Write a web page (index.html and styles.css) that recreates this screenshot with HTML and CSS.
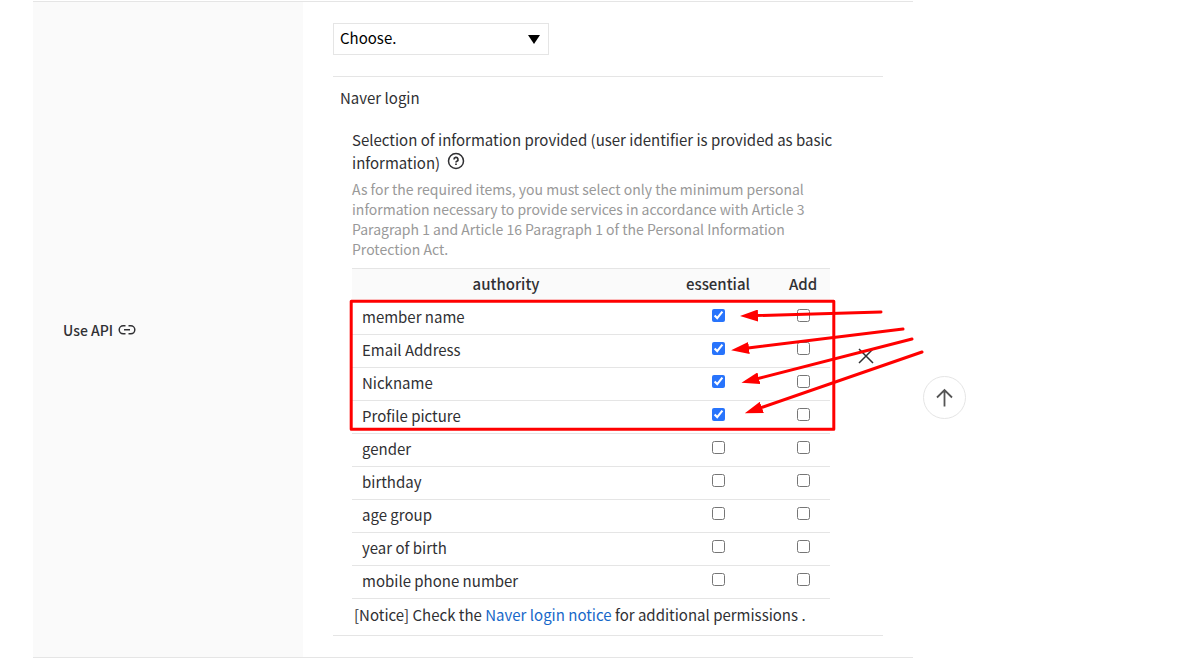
FILE: index.html
```
<!DOCTYPE html>
<html lang="en">
<head>
    <meta charset="UTF-8">
    <meta name="viewport" content="width=device-width, initial-scale=1.0">
    <title>Use API</title>
    <link rel="stylesheet" href="styles.css">
</head>
<body>
    <div class="page">
        <main class="form-row">
            <div class="row-label">
                <span>Use API</span>
                <svg class="link-icon" width="18" height="12" viewBox="0 0 18 12" fill="none" stroke="currentColor" stroke-width="1.5">
                    <path d="M7.500 1.800H5.200a4 4 0 0 0 0 8H7.500M10.500 1.800h2.300a4 4 0 0 1 0 8H10.500M6 5.800h6"/>
                </svg>
            </div>

            <div class="row-content">
                <select class="api-select" aria-label="Use API">
                    <option>Choose.</option>
                </select>

                <!-- Naver login -->
                <section class="api-item">
                    <div class="api-body">
                        <h2 class="api-name">Naver login</h2>
                        <div class="api-detail">
                            <p class="detail-title">
                                Selection of information provided (user identifier is provided as basic information)
                                <button class="help-btn" type="button" aria-label="Help">
                                    <svg width="18" height="18" viewBox="0 0 18 18" fill="none" stroke="currentColor" stroke-width="1.5">
                                        <circle cx="9" cy="9" r="7.500"/>
                                        <path d="M7 7.500a2 2 0 1 1 2.900 1.700Q9 9.600 9 10.500M9 11.600v1.500" stroke-width="1.700"/>
                                    </svg>
                                </button>
                            </p>
                            <p class="detail-desc">As for the required items, you must select only the minimum personal information necessary to provide services in accordance with Article 3 Paragraph 1 and Article 16 Paragraph 1 of the Personal Information Protection Act.</p>

                            <div class="table-wrap">
                                <table class="auth-table">
                                    <thead>
                                        <tr><th>authority</th><th class="col-essential">essential</th><th class="col-add">Add</th></tr>
                                    </thead>
                                    <tbody>
                                        <tr>
                                            <td>member name</td>
                                            <td><input type="checkbox" aria-label="member name essential" checked></td>
                                            <td><input type="checkbox" aria-label="member name add"></td>
                                        </tr>
                                        <tr>
                                            <td>Email Address</td>
                                            <td><input type="checkbox" aria-label="Email Address essential" checked></td>
                                            <td><input type="checkbox" aria-label="Email Address add"></td>
                                        </tr>
                                        <tr>
                                            <td>Nickname</td>
                                            <td><input type="checkbox" aria-label="Nickname essential" checked></td>
                                            <td><input type="checkbox" aria-label="Nickname add"></td>
                                        </tr>
                                        <tr>
                                            <td>Profile picture</td>
                                            <td><input type="checkbox" aria-label="Profile picture essential" checked></td>
                                            <td><input type="checkbox" aria-label="Profile picture add"></td>
                                        </tr>
                                        <tr>
                                            <td>gender</td>
                                            <td><input type="checkbox" aria-label="gender essential"></td>
                                            <td><input type="checkbox" aria-label="gender add"></td>
                                        </tr>
                                        <tr>
                                            <td>birthday</td>
                                            <td><input type="checkbox" aria-label="birthday essential"></td>
                                            <td><input type="checkbox" aria-label="birthday add"></td>
                                        </tr>
                                        <tr>
                                            <td>age group</td>
                                            <td><input type="checkbox" aria-label="age group essential"></td>
                                            <td><input type="checkbox" aria-label="age group add"></td>
                                        </tr>
                                        <tr>
                                            <td>year of birth</td>
                                            <td><input type="checkbox" aria-label="year of birth essential"></td>
                                            <td><input type="checkbox" aria-label="year of birth add"></td>
                                        </tr>
                                        <tr>
                                            <td>mobile phone number</td>
                                            <td><input type="checkbox" aria-label="mobile phone number essential"></td>
                                            <td><input type="checkbox" aria-label="mobile phone number add"></td>
                                        </tr>
                                    </tbody>
                                </table>

                                <!-- red box and arrows over the first four rows -->
                                <svg class="markup" width="580" height="136" viewBox="0 0 580 136" fill="none" stroke="#f00" stroke-width="3" stroke-linecap="round">
                                    <defs>
                                        <marker id="head" markerUnits="userSpaceOnUse" markerWidth="18" markerHeight="12" refX="3" refY="6" orient="auto">
                                            <path d="M0 0L18 6L0 12Z" fill="#f00" stroke="none"/>
                                        </marker>
                                    </defs>
                                    <rect x="3.200" y="3.200" width="482.600" height="128" stroke-linejoin="round"/>
                                    <path d="M533 14L407 17.600" marker-end="url(#head)"/>
                                    <path d="M555 31L398 50.300" marker-end="url(#head)"/>
                                    <path d="M564 41L408 81" marker-end="url(#head)"/>
                                    <path d="M574 54L411 110.400" marker-end="url(#head)"/>
                                </svg>
                            </div>
                        </div>
                        <p class="notice">[Notice] Check the <a href="#">Naver login notice</a> for additional permissions .</p>
                    </div>
                    <button class="remove-btn" type="button" aria-label="Remove">
                        <svg width="16" height="16" viewBox="0 0 16 16" fill="none" stroke="currentColor" stroke-width="1.5">
                            <path d="M1 1L15 15M15 1L1 15"/>
                        </svg>
                    </button>
                </section>
            </div>
        </main>

        <aside class="side">
            <button class="top-btn" type="button" aria-label="Back to top">
                <svg width="18" height="20" viewBox="0 0 18 20" fill="none" stroke="#555" stroke-width="1.800">
                    <path d="M8.500 18.500V2M1 9.500L8.500 2L16 9.500"/>
                </svg>
            </button>
        </aside>
    </div>
</body>
</html>
```
FILE: styles.css
```
* {
    margin: 0;
    padding: 0;
    box-sizing: border-box;
}

body {
    background: #fff;
    color: #303033;
    font-family: "Noto Sans CJK KR", "Noto Sans", sans-serif;
    font-size: 15px;
    line-height: 22px;
}

button {
    border: none;
    background: none;
    color: inherit;
    cursor: pointer;
}

svg {
    display: block;
}

.page {
    display: flex;
    align-items: flex-start;
    padding: 1px 0 0 33px;
}

/* form row */
.form-row {
    flex: 1;
    display: grid;
    grid-template-columns: 270px 1fr;
    border-top: 1px solid #e5e5e5;
    border-bottom: 1px solid #e5e5e5;
}

.row-label {
    display: flex;
    align-items: center;
    gap: 5px;
    padding-left: 30px;
    background: #fafafa;
    font-size: 14px;
    font-weight: 500;
}

.row-content {
    padding: 21px 30px;
}

.api-select {
    display: block;
    width: 216px;
    height: 32px;
    padding: 0 6px 2px;
    border: 1px solid #e5e5e5;
    border-radius: 0;
    appearance: none;
    background: #fff url("data:image/svg+xml,%3Csvg xmlns='http://www.w3.org/2000/svg' width='12' height='9'%3E%3Cpath d='M0 0h12L6 9z'/%3E%3C/svg%3E") no-repeat right 8px center;
    color: #000;
    font: inherit;
}

/* api item */
.api-item {
    display: flex;
    margin-top: 21px;
    border-top: 1px solid #e5e5e5;
    border-bottom: 1px solid #e5e5e5;
}

.api-body {
    flex: 1;
    padding: 10px 0 9px 19px;
}

.api-name {
    margin-left: -12px;
    font-size: 15px;
    font-weight: 400;
}

.api-detail {
    padding-top: 19px;
}

.detail-title {
    margin-right: -12px;
    line-height: 23px;
}

.help-btn {
    display: inline-block;
    margin-left: 4px;
    vertical-align: -1px;
}

.detail-desc {
    margin: 5px 0 9px;
    color: #999;
    font-size: 14px;
    line-height: 20px;
}

.table-wrap {
    position: relative;
}

.auth-table {
    width: 100%;
    border-collapse: collapse;
    border-top: 1px solid #e5e5e5;
}

.auth-table th,
.auth-table td {
    height: 33px;
    padding-bottom: 3px;
    border-bottom: 1px solid #e5e5e5;
    text-align: center;
    vertical-align: middle;
}

.auth-table th {
    background: #fafafa;
    font-weight: 500;
}

.auth-table td:first-child {
    padding-left: 10px;
    text-align: left;
}

.auth-table input {
    display: block;
    width: 13px;
    height: 13px;
    margin: 0 auto 3px;
    accent-color: #2874fc;
}

.col-essential {
    width: 116px;
}

.col-add {
    width: 54px;
}

.markup {
    position: absolute;
    top: 30px;
    left: -4px;
    pointer-events: none;
}

.notice {
    padding: 5px 0 0 2px;
}

.notice a {
    color: #1768c9;
    text-decoration: none;
}

.remove-btn {
    display: flex;
    align-items: center;
    justify-content: center;
    width: 53px;
    padding-left: 18px;
}

/* back to top */
.side {
    width: 280px;
    padding: 375px 10px 0;
}

.top-btn {
    display: flex;
    align-items: center;
    justify-content: center;
    width: 43px;
    height: 43px;
    border: 1px solid #e5e5e5;
    border-radius: 50%;
    background: #fff;
}
```
